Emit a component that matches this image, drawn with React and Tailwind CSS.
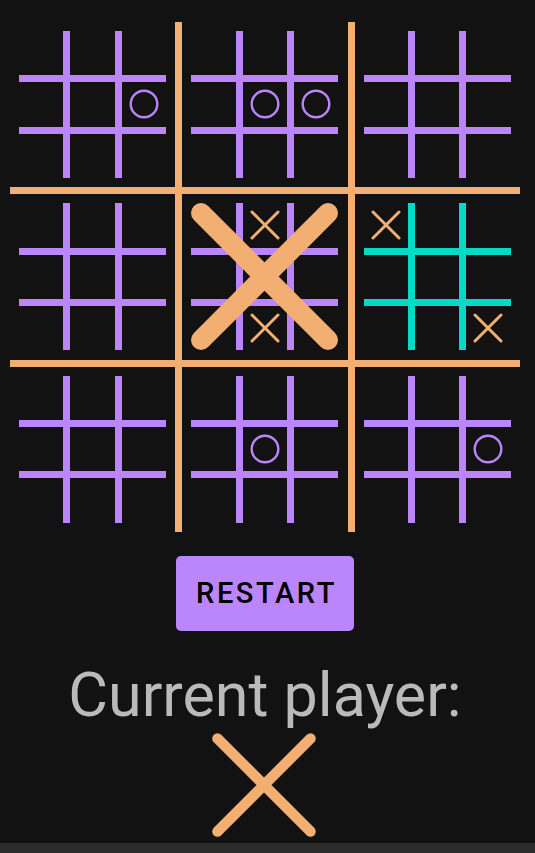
import React from "react";

const boards = [
  { cells: ["", "", "", "", "", "O", "", "", ""] },
  { cells: ["", "", "", "", "O", "O", "", "", ""] },
  { cells: ["", "", "", "", "", "", "", "", ""] },
  { cells: ["", "", "", "", "", "", "", "", ""] },
  { cells: ["", "X", "", "", "", "", "", "X", ""], won: true },
  { cells: ["X", "", "", "", "", "", "", "", "X"], active: true },
  { cells: ["", "", "", "", "", "", "", "", ""] },
  { cells: ["", "", "", "", "O", "", "", "", ""] },
  { cells: ["", "", "", "", "", "O", "", "", ""] },
];

function SmallX() {
  return (
    <svg width="30" height="30" viewBox="0 0 30 30">
      <g stroke="#f3ae72" strokeWidth="3" strokeLinecap="round">
        <line x1="2" y1="2" x2="28" y2="28" />
        <line x1="28" y1="2" x2="2" y2="28" />
      </g>
    </svg>
  );
}

function SmallO() {
  return (
    <svg width="30" height="30" viewBox="0 0 30 30">
      <circle cx="15" cy="15" r="13.3" fill="none" stroke="#bb86fc" strokeWidth="2.4" />
    </svg>
  );
}

function SmallBoard({ cells, active }) {
  return (
    <div
      className={
        active
          ? "grid grid-cols-3 grid-rows-3 gap-[7px] w-[147px] h-[147px] bg-[#03dac6]"
          : "grid grid-cols-3 grid-rows-3 gap-[7px] w-[147px] h-[147px] bg-[#bb86fc]"
      }
    >
      {cells.map((c, i) => (
        <div key={i} className="bg-[#121212] flex items-center justify-center">
          {c === "X" ? <SmallX /> : c === "O" ? <SmallO /> : null}
        </div>
      ))}
    </div>
  );
}

export default function App() {
  return (
    <div className="w-[535px] h-[853px] bg-[#121212] flex flex-col font-['Roboto',_sans-serif] overflow-hidden">
      <div className="w-[530px] flex-1 flex flex-col items-center pt-[22px]">
        <div className="grid grid-cols-3 grid-rows-3 gap-[7px] w-[510px] h-[510px] bg-[#f3ae72]">
          {boards.map((b, i) => (
            <div key={i} className="relative bg-[#121212] p-[9px]">
              <SmallBoard cells={b.cells} active={b.active} />
              {b.won && (
                <svg
                  className="absolute left-[9px] top-[9px]"
                  width="147"
                  height="147"
                  viewBox="0 0 147 147"
                >
                  <g stroke="#f3ae72" strokeWidth="20" strokeLinecap="round">
                    <line x1="10" y1="10" x2="137" y2="137" />
                    <line x1="137" y1="10" x2="10" y2="137" />
                  </g>
                </svg>
              )}
            </div>
          ))}
        </div>
        <button className="mt-[24px] w-[178px] h-[75px] rounded-[5px] bg-[#bb86fc] text-black text-[29px] font-medium tracking-[2.6px] flex items-center justify-center pl-[3px]">
          RESTART
        </button>
        <div className="mt-[27px] text-[61px] leading-[74px] text-[#bababa]">Current player:</div>
        <svg width="104" height="104" viewBox="0 0 104 104" className="mt-[1px] ml-[-3px]">
          <g stroke="#f3ae72" strokeWidth="10.5" strokeLinecap="round">
            <line x1="5.5" y1="5.5" x2="98.5" y2="98.5" />
            <line x1="98.5" y1="5.5" x2="5.5" y2="98.5" />
          </g>
        </svg>
      </div>
      <div className="h-[10px] bg-[#2c2c2c]" />
    </div>
  );
}
